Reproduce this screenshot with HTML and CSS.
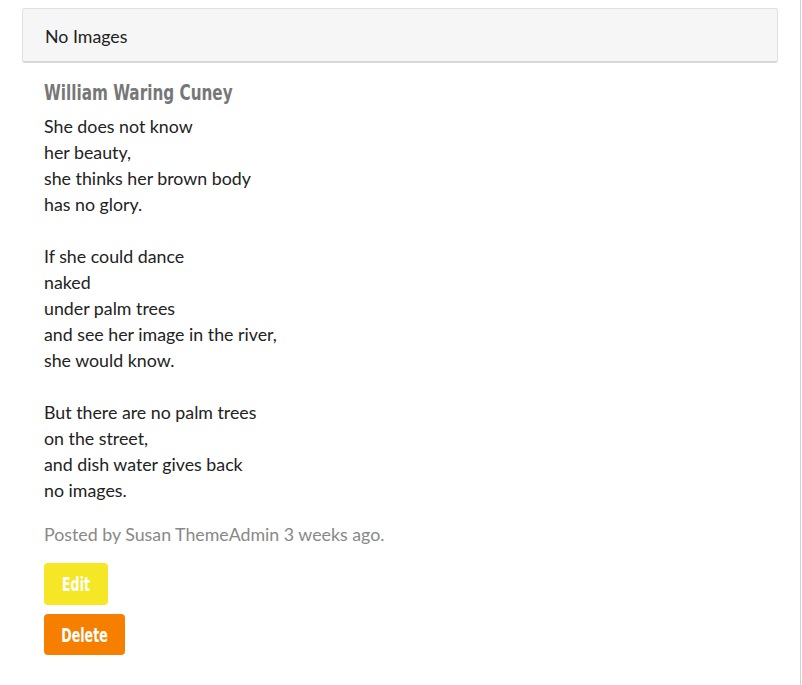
FILE: index.html
```html
<!DOCTYPE html>
<html>
<head>
<meta charset="utf-8">
<link rel="stylesheet" href="styles.css">
</head>
<body>
<div class="page">
  <div class="panel-heading">No Images</div>
  <div class="content">
    <h2 class="title"><span class="narrow narrow-left">William Waring Cuney</span></h2>
    <div class="poem">
      <p>She does not know<br>her beauty,<br>she thinks her brown body<br>has no glory.</p>
      <p>If she could dance<br>naked<br>under palm trees<br>and see her image in the river,<br>she would know.</p>
      <p>But there are no palm trees<br>on the street,<br>and dish water gives back<br>no images.</p>
    </div>
    <p class="meta">Posted by Susan ThemeAdmin 3 weeks ago.</p>
    <div class="actions">
      <a class="btn btn-edit"><span class="narrow btn-label">Edit</span></a>
      <a class="btn btn-delete"><span class="narrow btn-label">Delete</span></a>
    </div>
  </div>
</div>
</body>
</html>
```
FILE: styles.css
```css
html, body {
  margin: 0;
  padding: 0;
  background: #fff;
}
body {
  font-family: "Lato", "Noto Sans", sans-serif;
  color: #222;
}
.page {
  width: 801px;
  min-height: 685px;
  border-right: 1px solid #d0d0d0;
  box-sizing: border-box;
  padding: 8px 22px 0 22px;
}
.panel-heading {
  height: 55px;
  box-sizing: border-box;
  background: #f6f6f6;
  border: 1px solid #e0e0e0;
  border-bottom: 2px solid #d8d8d8;
  border-radius: 3px;
  padding: 1px 23px 0 22px;
  display: flex;
  align-items: center;
  font-size: 17.8px;
  color: #222;
}
.content {
  padding: 0 22px;
}
.narrow {
  display: inline-block;
  transform: scaleX(0.77);
  transform-origin: center;
}
.narrow-left {
  transform-origin: left center;
}
.title {
  font-family: "DejaVu Sans Condensed", sans-serif;
  font-size: 22px;
  font-weight: bold;
  color: #777;
  margin: 17px 0 7px 0;
  line-height: 26px;
}
.poem p {
  margin: 0 0 26px 0;
  font-size: 17.8px;
  line-height: 26px;
}
.poem p:last-child {
  margin-bottom: 18px;
}
.meta {
  margin: 0 0 16px 0;
  font-size: 17.8px;
  line-height: 26px;
  color: #888;
}
.actions {
  display: flex;
  flex-direction: column;
  align-items: flex-start;
  gap: 9px;
}
.btn {
  display: inline-flex;
  align-items: center;
  justify-content: center;
  height: 42px;
  border-radius: 4px;
  font-family: "DejaVu Sans Condensed", sans-serif;
  font-weight: bold;
  font-size: 19px;
  color: #fff;
  box-sizing: border-box;
}
.btn-label {
  transform: scaleX(0.74);
}
.btn-edit {
  background: #f5e626;
  width: 64px;
}
.btn-delete {
  background: #f77f00;
  width: 81px;
  height: 41px;
}
```
